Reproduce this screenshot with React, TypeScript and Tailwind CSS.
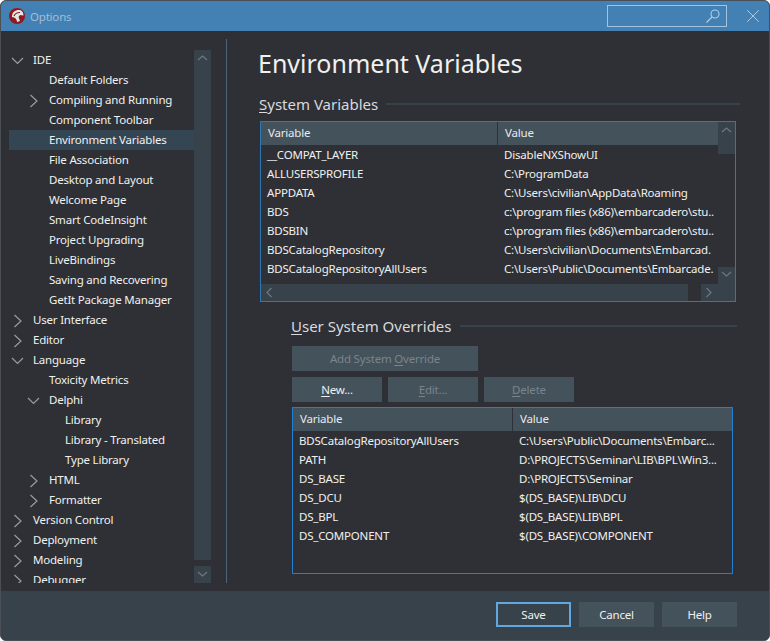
import { X } from "lucide-react";

type TreeNode = { label: string; depth: number; arrow?: "open" | "closed"; selected?: boolean };

const tree: TreeNode[] = [
  { label: "IDE", depth: 0, arrow: "open" },
  { label: "Default Folders", depth: 1 },
  { label: "Compiling and Running", depth: 1, arrow: "closed" },
  { label: "Component Toolbar", depth: 1 },
  { label: "Environment Variables", depth: 1, selected: true },
  { label: "File Association", depth: 1 },
  { label: "Desktop and Layout", depth: 1 },
  { label: "Welcome Page", depth: 1 },
  { label: "Smart CodeInsight", depth: 1 },
  { label: "Project Upgrading", depth: 1 },
  { label: "LiveBindings", depth: 1 },
  { label: "Saving and Recovering", depth: 1 },
  { label: "GetIt Package Manager", depth: 1 },
  { label: "User Interface", depth: 0, arrow: "closed" },
  { label: "Editor", depth: 0, arrow: "closed" },
  { label: "Language", depth: 0, arrow: "open" },
  { label: "Toxicity Metrics", depth: 1 },
  { label: "Delphi", depth: 1, arrow: "open" },
  { label: "Library", depth: 2 },
  { label: "Library - Translated", depth: 2 },
  { label: "Type Library", depth: 2 },
  { label: "HTML", depth: 1, arrow: "closed" },
  { label: "Formatter", depth: 1, arrow: "closed" },
  { label: "Version Control", depth: 0, arrow: "closed" },
  { label: "Deployment", depth: 0, arrow: "closed" },
  { label: "Modeling", depth: 0, arrow: "closed" },
  { label: "Debugger", depth: 0, arrow: "closed" },
];

const systemVars = [
  ["__COMPAT_LAYER", "DisableNXShowUI"],
  ["ALLUSERSPROFILE", "C:\\ProgramData"],
  ["APPDATA", "C:\\Users\\civilian\\AppData\\Roaming"],
  ["BDS", "c:\\program files (x86)\\embarcadero\\stu.."],
  ["BDSBIN", "c:\\program files (x86)\\embarcadero\\stu.."],
  ["BDSCatalogRepository", "C:\\Users\\civilian\\Documents\\Embarcad."],
  ["BDSCatalogRepositoryAllUsers", "C:\\Users\\Public\\Documents\\Embarcade."],
];

const overrides = [
  ["BDSCatalogRepositoryAllUsers", "C:\\Users\\Public\\Documents\\Embarc..."],
  ["PATH", "D:\\PROJECTS\\Seminar\\LIB\\BPL\\Win3..."],
  ["DS_BASE", "D:\\PROJECTS\\Seminar"],
  ["DS_DCU", "$(DS_BASE)\\LIB\\DCU"],
  ["DS_BPL", "$(DS_BASE)\\LIB\\BPL"],
  ["DS_COMPONENT", "$(DS_BASE)\\COMPONENT"],
];

function Chevron({
  dir,
  className,
}: {
  dir: "up" | "down" | "left" | "right" | "treeOpen" | "treeClosed";
  className?: string;
}) {
  const points = {
    up: "3,9 7.5,5 12,9",
    down: "3,5 7.5,9 12,5",
    treeOpen: "2,5 7.5,10.5 13,5",
    left: "9.5,3 5,7.5 9.5,12",
    right: "5.5,3 10,7.5 5.5,12",
    treeClosed: "4.5,2 11,8 4.5,14",
  }[dir];
  return (
    <svg width="15" height="15" viewBox="0 0 15 15" fill="none" className={className}>
      <polyline points={points} stroke="currentColor" strokeWidth="1.2" />
    </svg>
  );
}

function Logo() {
  return (
    <svg width="16" height="16" viewBox="0 0 16 16">
      <circle cx="8" cy="8" r="8" fill="#8e1a20" />
      <path d="M3 9 C3 4 6 2 10 2 C13 2 14.5 4.5 14.5 7.5 L11 7 L9.5 9 L11 13 L8 14 C8 11 6 9.5 3 9Z" fill="#e6e6e6" />
      <path d="M5 8 C6 5.5 8 4.5 11 4.5" stroke="#8e1a20" strokeWidth="1.2" fill="none" />
    </svg>
  );
}

function Underlined({ first, rest }: { first: string; rest: string }) {
  return (
    <>
      <span className="underline underline-offset-2">{first}</span>
      {rest}
    </>
  );
}

function DataHeader({ firstWidth }: { firstWidth: string }) {
  return (
    <div className="flex h-[23px] items-center bg-[#44525c] text-[11.5px] tracking-[-0.2px] text-[#e8eaec]">
      <div className={`${firstWidth} h-full border-r border-[#2e3035] pl-[7px] leading-[22px]`}>Variable</div>
      <div className="h-full flex-1 pl-[7px] leading-[22px]">Value</div>
    </div>
  );
}

function DataRows({ rows, firstWidth }: { rows: string[][]; firstWidth: string }) {
  return (
    <div>
      {rows.map(([name, value]) => (
        <div key={name} className="flex h-[19px] items-center whitespace-nowrap text-[11.5px] tracking-[-0.2px] text-[#f0f0f0]">
          <div className={`${firstWidth} pl-[6px]`}>{name}</div>
          <div className="flex-1 overflow-hidden pl-[7px]">{value}</div>
        </div>
      ))}
    </div>
  );
}

function GroupTitle({ first, rest, lineClass }: { first: string; rest: string; lineClass: string }) {
  return (
    <div className={`flex items-center gap-[8px] text-[15px] leading-[20px] text-[#d8dadc] ${lineClass}`}>
      <span className="whitespace-nowrap">
        <Underlined first={first} rest={rest} />
      </span>
      <div className="h-[2px] flex-1 bg-[#38424a]" />
    </div>
  );
}

function ActionButton({ width, disabled, children }: { width: string; disabled?: boolean; children: React.ReactNode }) {
  return (
    <button className={`${width} h-[25px] bg-[#44525c] text-[11.5px] tracking-[-0.2px] ${disabled ? "text-[#7a848b]" : "text-[#f0f0f0]"}`}>
      {children}
    </button>
  );
}

export default function App() {
  return (
    <div
      className="flex h-[641px] w-[770px] flex-col overflow-hidden rounded-[6px] border border-[#4a4f55] bg-[#2e3035] text-[#f0f0f0]"
      style={{ fontFamily: '"Noto Sans", "Open Sans", sans-serif' }}
    >
      {/* title bar */}
      <div className="flex h-[30px] shrink-0 items-center bg-[#4380b4] pl-[8px] pr-[5px]">
        <Logo />
        <span className="ml-[5px] pt-[1px] text-[11.5px] tracking-[-0.2px] text-[#a3bdd6]">Options</span>
        <div className="ml-auto mr-[15px] flex h-[22px] w-[120px] items-center justify-end border border-[#a3c3de] pr-[5px] text-[#b5cfe5]">
          <svg width="16" height="16" viewBox="0 0 16 16" fill="none" stroke="currentColor" strokeWidth="1.1">
            <circle cx="10" cy="6" r="4" />
            <line x1="7" y1="9" x2="1.5" y2="14.5" />
          </svg>
        </div>
        <X size={22} strokeWidth={0.9} className="text-[#c5d8e8]" />
      </div>

      {/* main area */}
      <div className="flex min-h-0 flex-1 bg-[#2e3035] pl-[8px] pt-[19px]">
        <div className="flex h-[533px] w-[203px] shrink-0">
          <div className="h-full w-[185px] overflow-hidden">
            {tree.map((node) => (
              <div
                key={node.label}
                className={`relative flex h-[20px] items-center whitespace-nowrap text-[11.5px] tracking-[-0.2px] ${
                  node.selected ? "bg-[#344554]" : ""
                } ${node.depth === 0 ? "pl-[24px]" : node.depth === 1 ? "pl-[40px]" : "pl-[56px]"}`}
              >
                {node.arrow && (
                  <Chevron
                    dir={node.arrow === "open" ? "treeOpen" : "treeClosed"}
                    className={`absolute text-[#9a9c9f] ${node.depth === 0 ? "left-[1px]" : "left-[17px]"}`}
                  />
                )}
                <span className="pb-[1px]">{node.label}</span>
              </div>
            ))}
          </div>
          <div className="flex h-full w-[17px] flex-col">
            <div className="flex h-[510px] justify-center bg-[#38424a] pt-[1px] text-[#6d7880]">
              <Chevron dir="up" />
            </div>
            <div className="mt-[6px] flex h-[17px] items-center justify-center bg-[#38424a] text-[#6d7880]">
              <Chevron dir="down" />
            </div>
          </div>
        </div>
        <div className="mt-[-11px] ml-[14px] h-[544px] w-[1px] shrink-0 bg-[#4b6478]" />

        <div className="ml-[32px] min-w-0 flex-1">
          <h1 className="-ml-[1px] mt-[-2px] h-[38px] text-[25px] leading-[30px] text-[#f0f0f0]">Environment Variables</h1>
          <GroupTitle first="S" rest="ystem Variables" lineClass="mt-[8px] mr-[29px]" />

          {/* system variables table */}
          <div className="mt-[7px] ml-[1px] mr-[33px] h-[181px] border border-[#2f77b5]">
            <div className="flex h-[162px]">
              <div className="min-w-0 flex-1">
                <DataHeader firstWidth="w-[237px]" />
                <DataRows rows={systemVars} firstWidth="w-[236px]" />
              </div>
              <div className="flex w-[17px] flex-col justify-between">
                <div className="flex h-[32px] justify-center bg-[#38424a] pt-[1px] text-[#6d7880]">
                  <Chevron dir="up" />
                </div>
                <div className="flex h-[17px] justify-center bg-[#38424a] text-[#6d7880]">
                  <Chevron dir="down" />
                </div>
              </div>
            </div>
            <div className="flex h-[17px]">
              <div className="flex w-[427px] items-center bg-[#38424a] pl-[1px] text-[#6d7880]">
                <Chevron dir="left" />
              </div>
              <div className="ml-[13px] flex flex-1 items-center bg-[#38424a] text-[#6d7880]">
                <Chevron dir="right" />
              </div>
            </div>
          </div>

          {/* user overrides */}
          <div className="ml-[33px] mt-[14px]">
            <GroupTitle first="U" rest="ser System Overrides" lineClass="-ml-[1px] mr-[32px]" />
            <div className="mt-[9px]">
              <ActionButton width="w-[186px]" disabled>
                Add System <Underlined first="O" rest="verride" />
              </ActionButton>
            </div>
            <div className="mt-[6px] flex gap-[6px]">
              <ActionButton width="w-[90px]">
                <Underlined first="N" rest="ew..." />
              </ActionButton>
              <ActionButton width="w-[90px]" disabled>
                <Underlined first="E" rest="dit..." />
              </ActionButton>
              <ActionButton width="w-[90px]" disabled>
                <Underlined first="D" rest="elete" />
              </ActionButton>
            </div>
            <div className="mt-[5px] mr-[36px] h-[167px] border border-[#1f7fd1]">
              <DataHeader firstWidth="w-[220px]" />
              <DataRows rows={overrides} firstWidth="w-[219px]" />
            </div>
          </div>
        </div>
      </div>

      {/* footer */}
      <div className="flex h-[49px] shrink-0 items-center justify-end gap-[8px] bg-[#38424a] pr-[32px] pb-[2px] text-[11.5px] tracking-[-0.2px]">
        <button className="h-[25px] w-[75px] border-2 border-[#62a8e0]">Save</button>
        <button className="h-[25px] w-[75px] bg-[#44525c]">Cancel</button>
        <button className="h-[25px] w-[75px] bg-[#44525c]">Help</button>
      </div>
    </div>
  );
}
